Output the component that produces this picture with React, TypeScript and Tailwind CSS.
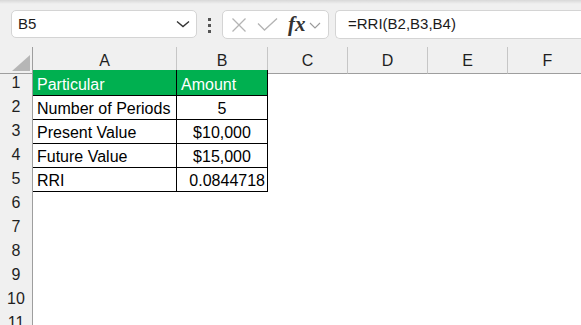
import React from 'react';

const font = { fontFamily: '"Liberation Sans", Arial, sans-serif' };

const columns = ['A', 'B', 'C', 'D', 'E', 'F'];

interface Row {
  label: string;
  value: string;
  align: 'center' | 'right';
}

const rows: Row[] = [
  { label: 'Number of Periods', value: '5', align: 'center' },
  { label: 'Present Value', value: '$10,000', align: 'center' },
  { label: 'Future Value', value: '$15,000', align: 'center' },
  { label: 'RRI', value: '0.0844718', align: 'right' },
];

function Toolbar() {
  return (
    <div className="relative flex h-[47px] items-start gap-0 bg-[#f0f0f0] pt-[10px]">
      <div className="absolute inset-x-0 top-0 h-[4px] bg-gradient-to-b from-[#d8d8d8] to-[#f0f0f0]" />
      <div className="ml-[11px] flex h-[28px] w-[186px] items-center justify-between rounded-[5px] border border-[#d4d4d4] bg-white pl-[6px] pr-[6px]">
        <span className="text-[15px] text-[#1b1b1b]">B5</span>
        <svg width="14" height="8" viewBox="0 0 14 8">
          <path d="M1 1.5 L7 6.5 L13 1.5" fill="none" stroke="#333" strokeWidth="1.4" />
        </svg>
      </div>
      <div className="ml-[11px] mt-[8px] flex flex-col gap-[3px]">
        <span className="block h-[3px] w-[3px] bg-[#555]" />
        <span className="block h-[3px] w-[3px] bg-[#555]" />
        <span className="block h-[3px] w-[3px] bg-[#555]" />
      </div>
      <div className="ml-[11px] flex h-[29px] w-[107px] items-center rounded-[5px] border border-[#d4d4d4] bg-white pl-[8px]">
        <svg width="16" height="14" viewBox="0 0 16 14">
          <path d="M1.5 0.5 L14.5 13.5 M14.5 0.5 L1.5 13.5" stroke="#b4b4b4" strokeWidth="1.3" fill="none" />
        </svg>
        <svg width="21" height="13" viewBox="0 0 21 13" className="ml-[10px]">
          <path d="M1 5.5 L7.5 12 L20 0.5" stroke="#b4b4b4" strokeWidth="1.3" fill="none" />
        </svg>
        <span
          className="ml-[10px] text-[21px] font-bold italic leading-none text-[#333]"
          style={{ fontFamily: '"Liberation Serif", "Times New Roman", serif' }}
        >
          fx
        </span>
        <svg width="12" height="7" viewBox="0 0 12 7" className="ml-[3px] mt-[2px]">
          <path d="M1 1 L6 6 L11 1" fill="none" stroke="#9a9a9a" strokeWidth="1.1" />
        </svg>
      </div>
      <div className="ml-[6px] flex h-[29px] flex-1 items-center rounded-l-[5px] border border-r-0 border-[#d4d4d4] bg-white pl-[12px]">
        <span className="text-[15px] text-[#1b1b1b]">=RRI(B2,B3,B4)</span>
      </div>
    </div>
  );
}

const gridCols = 'grid grid-cols-[33px_144px_91px_80px_80px_80px_80px]';

function HeaderRow() {
  return (
    <div className={`${gridCols} h-[23px]`}>
      <div className="relative border-b border-r border-[#9e9e9e] bg-[#f0f0f0]">
        <svg width="18" height="16" viewBox="0 0 18 16" className="absolute bottom-[2px] right-[2px]">
          <path d="M18 0 L18 16 L0 16 Z" fill="#b6b6b6" />
        </svg>
      </div>
      {columns.map((c) => (
        <div
          key={c}
          className="flex items-center justify-center border-b border-r border-b-[#9e9e9e] border-r-[#c6c6c6] bg-[#f0f0f0] pt-[2px] text-[16px] text-[#1f1f1f]"
        >
          {c}
        </div>
      ))}
    </div>
  );
}

function RowHeader({ n }: { n: number }) {
  return (
    <div className="flex items-center justify-center border-b border-r border-b-[#c6c6c6] border-r-[#9e9e9e] bg-[#f0f0f0] pt-[1px] text-[16px] text-[#1f1f1f]">
      {n}
    </div>
  );
}

export default function App() {
  return (
    <div className="h-[325px] w-[581px] overflow-hidden bg-white" style={font}>
      <Toolbar />
      <HeaderRow />
      <div className={`${gridCols} h-[24px]`}>
        <RowHeader n={1} />
        <div className="flex items-end border-b border-r border-black bg-[#00b050] pl-[4px] text-[16px] leading-[20px] text-white">
          Particular
        </div>
        <div className="flex items-end border-b border-r border-black bg-[#00b050] pl-[4px] text-[16px] leading-[20px] text-white">
          Amount
        </div>
        <div />
        <div />
        <div />
        <div />
      </div>
      {rows.map((r, i) => (
        <div key={r.label} className={`${gridCols} h-[24px]`}>
          <RowHeader n={i + 2} />
          <div className="flex items-end border-b border-r border-black pl-[4px] text-[16px] leading-[20px] text-black">
            {r.label}
          </div>
          <div
            className={`flex items-end border-b border-r border-black text-[16px] leading-[20px] text-black ${
              r.align === 'center' ? 'justify-center' : 'justify-end pr-[2px]'
            }`}
          >
            {r.value}
          </div>
          <div />
          <div />
          <div />
          <div />
        </div>
      ))}
      {[6, 7, 8, 9, 10, 11].map((n) => (
        <div key={n} className={`${gridCols} h-[24px]`}>
          <RowHeader n={n} />
        </div>
      ))}
    </div>
  );
}
